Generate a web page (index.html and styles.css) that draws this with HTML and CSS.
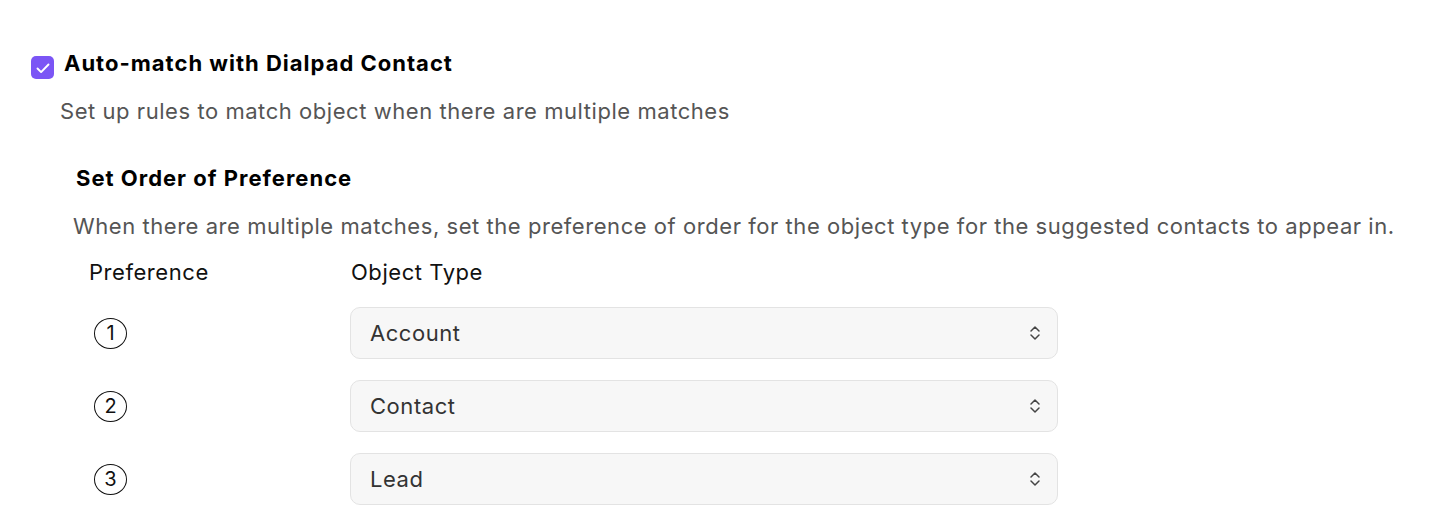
FILE: index.html
```html
<!DOCTYPE html>
<html>
<head>
<meta charset="utf-8">
<link rel="stylesheet" href="styles.css">
</head>
<body>
<div class="page">
  <div class="check-row">
    <span class="checkbox">
      <svg viewBox="0 0 22 22" width="22" height="22"><path d="M5.5 11.5l3.6 3.6L16.5 7.5" fill="none" stroke="#fff" stroke-width="1.9" stroke-linecap="round" stroke-linejoin="round"/></svg>
    </span>
    <span class="check-label">Auto-match with Dialpad Contact</span>
  </div>
  <p class="subtitle">Set up rules to match object when there are multiple matches</p>

  <div class="section">
    <h3 class="section-title">Set Order of Preference</h3>
    <p class="section-desc">When there are multiple matches, set the preference of order for the object type for the suggested contacts to appear in.</p>

    <div class="pref-table">
      <div class="col-head">Preference</div>
      <div class="col-head col-head-2">Object Type</div>

      <div class="num-cell"><span class="num">1</span></div>
      <div class="select"><span>Account</span><svg class="chev" viewBox="0 0 12 18" width="12" height="18"><path d="M2 7l4-4 4 4M2 11l4 4 4-4" fill="none" stroke="#444" stroke-width="1.5" stroke-linecap="round" stroke-linejoin="round"/></svg></div>

      <div class="num-cell"><span class="num">2</span></div>
      <div class="select"><span>Contact</span><svg class="chev" viewBox="0 0 12 18" width="12" height="18"><path d="M2 7l4-4 4 4M2 11l4 4 4-4" fill="none" stroke="#444" stroke-width="1.5" stroke-linecap="round" stroke-linejoin="round"/></svg></div>

      <div class="num-cell"><span class="num">3</span></div>
      <div class="select"><span>Lead</span><svg class="chev" viewBox="0 0 12 18" width="12" height="18"><path d="M2 7l4-4 4 4M2 11l4 4 4-4" fill="none" stroke="#444" stroke-width="1.5" stroke-linecap="round" stroke-linejoin="round"/></svg></div>
    </div>
  </div>
</div>
</body>
</html>
```
FILE: styles.css
```css
* { box-sizing: border-box; }
html, body { margin: 0; padding: 0; background: #fff; }
body {
  font-family: Inter, "Noto Sans", "Liberation Sans", sans-serif;
  color: #111;
  font-size: 22px;
  line-height: 24px;
  letter-spacing: 0.55px;
}
.page {
  padding: 51px 0 0 31px;
}
.check-row {
  display: flex;
  align-items: flex-start;
  gap: 10px;
}
.checkbox {
  width: 23px;
  height: 23px;
  margin-top: 5px;
  border-radius: 5px;
  background: #7b55f5;
  display: flex;
  align-items: center;
  justify-content: center;
  flex: none;
}
.check-label {
  font-weight: 700;
  font-size: 22px;
  line-height: 24px;
  letter-spacing: 1px;
  color: #000;
}
.subtitle {
  margin: 20px 0 0 29px;
  color: #555;
}
.section {
  padding-left: 42px;
  margin-top: 43px;
}
.section-title {
  margin: 0 0 0 3px;
  font-size: 22px;
  font-weight: 700;
  line-height: 24px;
  letter-spacing: 1px;
  color: #000;
}
.section-desc {
  margin: 24px 0 0 0;
  color: #555;
}
.pref-table {
  margin: 22px 0 0 16px;
  display: grid;
  grid-template-columns: 261px 708px;
  row-gap: 21px;
  align-items: center;
}
.col-head {
  color: #111;
  margin-bottom: 2px;
}
.col-head-2 { padding-left: 1px; }
.num-cell {
  padding-left: 5px;
  display: flex;
}
.num {
  width: 33px;
  height: 31px;
  border: 1.5px solid #111;
  border-radius: 50%;
  display: flex;
  align-items: center;
  justify-content: center;
  font-size: 20px;
  letter-spacing: 0;
  color: #111;
}
.select {
  height: 52px;
  border: 1.5px solid #e3e3e3;
  border-radius: 10px;
  background: #f7f7f7;
  display: flex;
  align-items: center;
  justify-content: space-between;
  padding: 0 16px 0 19px;
  color: #333;
}
.chev { flex: none; }
```
